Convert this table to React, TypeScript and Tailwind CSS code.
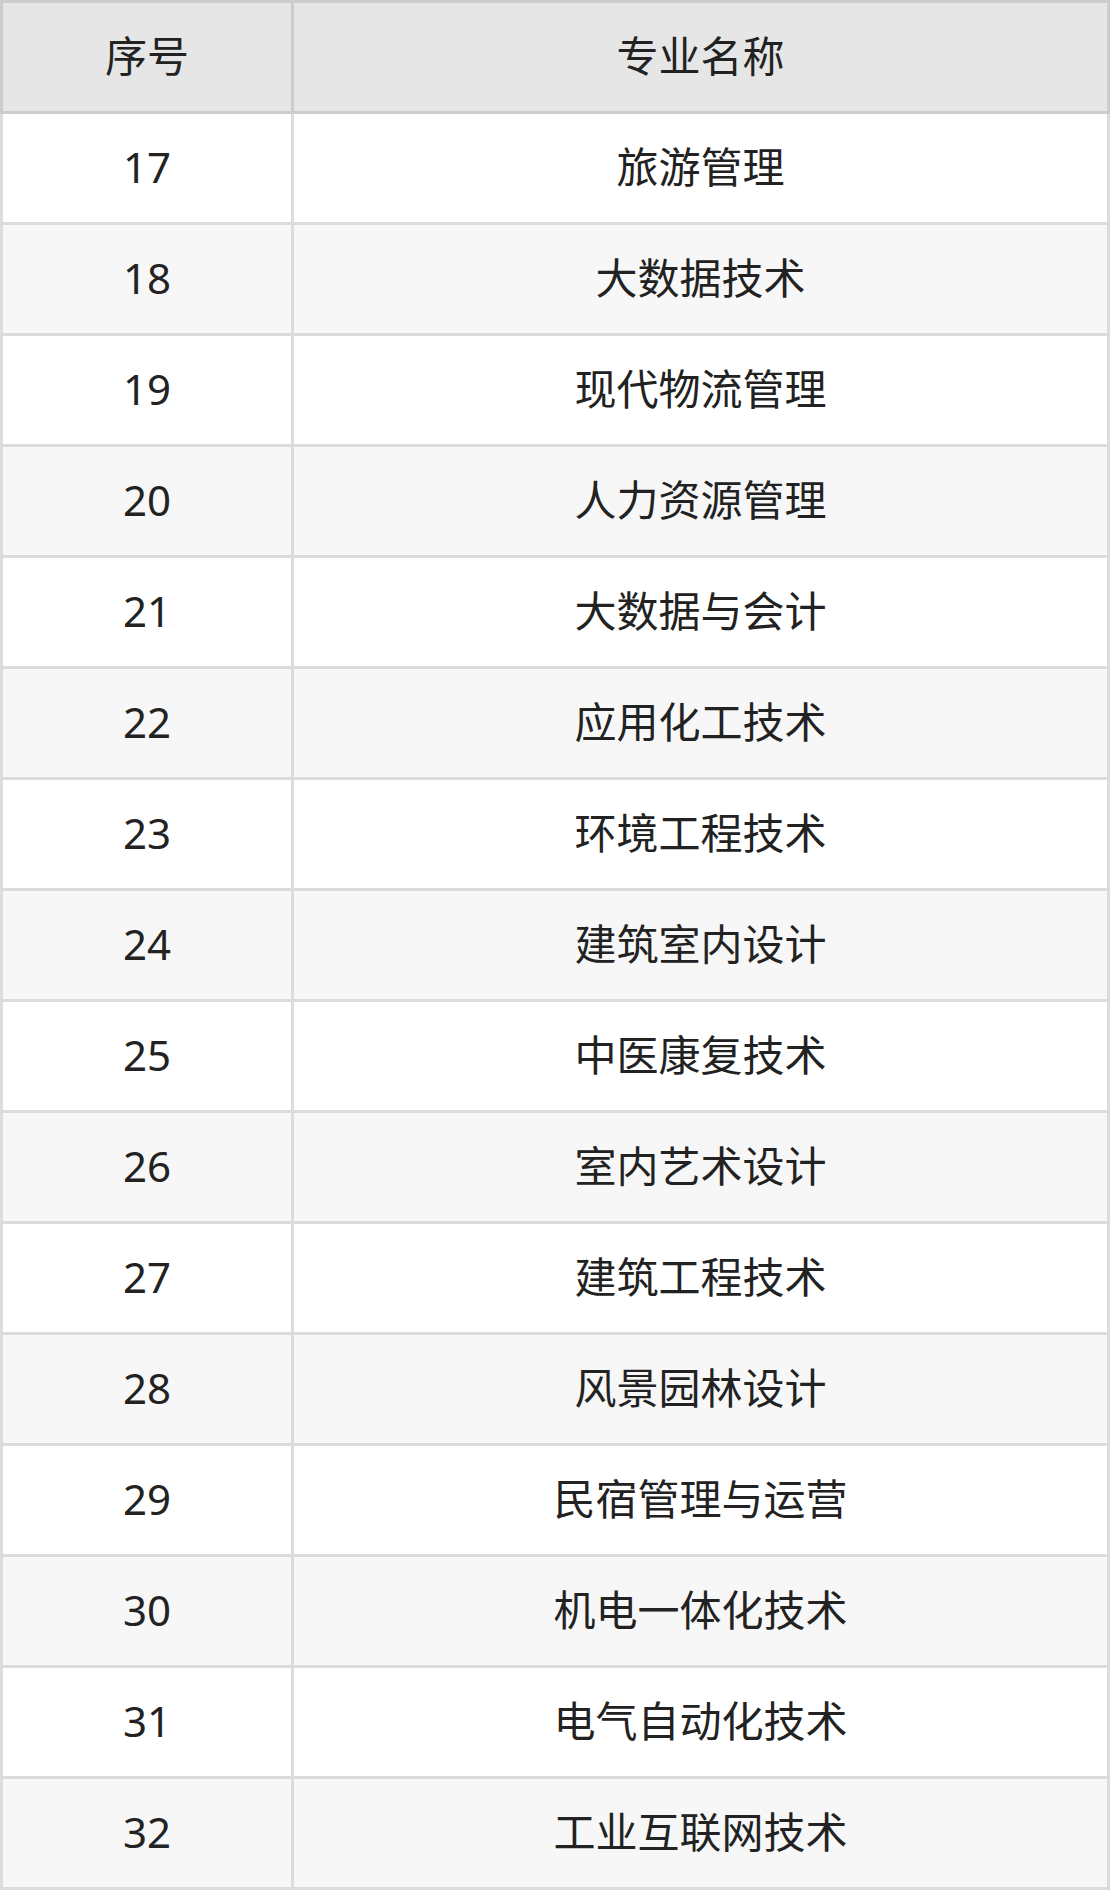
import React from "react";

const rows: [number, string][] = [
  [17, "旅游管理"],
  [18, "大数据技术"],
  [19, "现代物流管理"],
  [20, "人力资源管理"],
  [21, "大数据与会计"],
  [22, "应用化工技术"],
  [23, "环境工程技术"],
  [24, "建筑室内设计"],
  [25, "中医康复技术"],
  [26, "室内艺术设计"],
  [27, "建筑工程技术"],
  [28, "风景园林设计"],
  [29, "民宿管理与运营"],
  [30, "机电一体化技术"],
  [31, "电气自动化技术"],
  [32, "工业互联网技术"],
];

export default function App() {
  return (
    <div
      className="w-[1110px] text-[42px] text-[#222222]"
      style={{ fontFamily: '"Noto Sans", "Noto Sans CJK SC", sans-serif' }}
    >
      <div className="grid grid-cols-[294px_816px]">
        <div className="h-[114px] pb-[3px] flex items-center justify-center bg-[#e6e6e6] border-[3px] border-[#cdcdcd]">
          序号
        </div>
        <div className="h-[114px] pb-[3px] flex items-center justify-center bg-[#e6e6e6] border-y-[3px] border-r-[3px] border-[#cdcdcd]">
          专业名称
        </div>
        {rows.map(([n, name], i) => {
          const bg = i % 2 === 1 ? "bg-[#f7f7f7]" : "bg-white";
          return (
            <React.Fragment key={n}>
              <div
                className={`h-[111px] pb-[3px] flex items-center justify-center border-l-[3px] border-r-[3px] border-b-[3px] border-[#dcdcdc] ${bg}`}
              >
                {n}
              </div>
              <div
                className={`h-[111px] pb-[3px] flex items-center justify-center border-r-[3px] border-b-[3px] border-[#dcdcdc] ${bg}`}
              >
                {name}
              </div>
            </React.Fragment>
          );
        })}
      </div>
    </div>
  );
}
